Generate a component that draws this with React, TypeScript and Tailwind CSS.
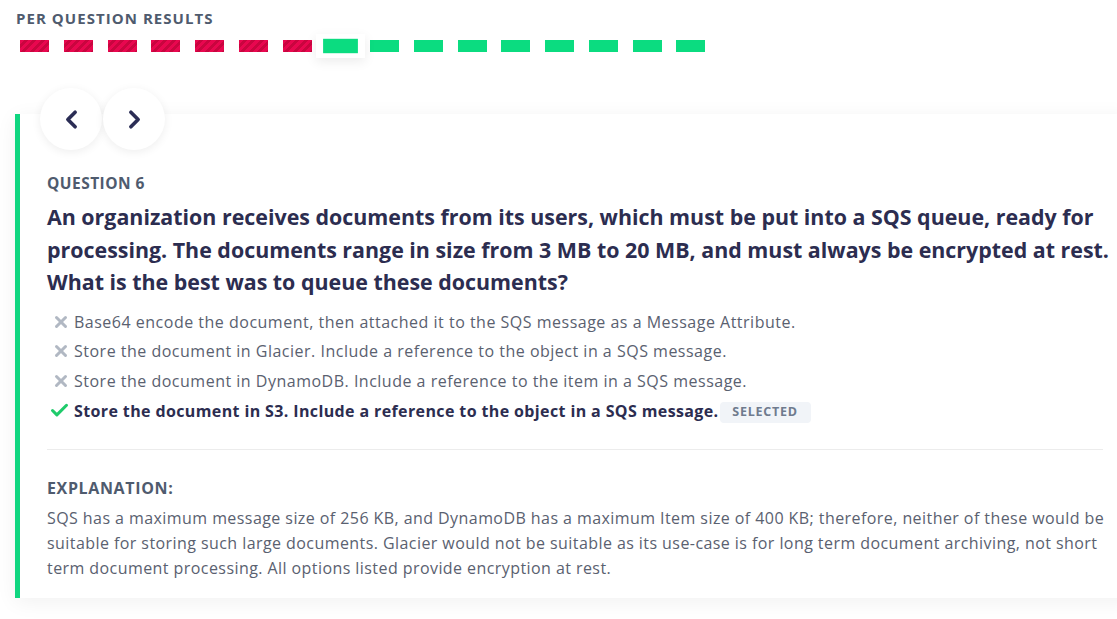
import { ChevronLeft, ChevronRight, X, Check } from "lucide-react";

const results = [
  false, false, false, false, false, false, false,
  true, true, true, true, true, true, true, true, true,
];

const current = 7;

const options = [
  { text: "Base64 encode the document, then attached it to the SQS message as a Message Attribute.", correct: false },
  { text: "Store the document in Glacier. Include a reference to the object in a SQS message.", correct: false },
  { text: "Store the document in DynamoDB. Include a reference to the item in a SQS message.", correct: false },
  { text: "Store the document in S3. Include a reference to the object in a SQS message.", correct: true, selected: true },
];

function ResultBar({ ok, active }: { ok: boolean; active: boolean }) {
  const bar = ok
    ? "bg-[#0bdc80]"
    : "bg-[repeating-linear-gradient(135deg,#e8074f_0px,#e8074f_3px,#c9053f_3px,#c9053f_6px)]";
  if (active) {
    return (
      <div className="relative w-[29px] h-[12px]">
        <div className="absolute -left-[6px] -top-[4px] w-[41px] h-[20px] scale-[1.2] bg-white shadow-[0_3px_10px_rgba(0,0,0,0.08)] flex items-center justify-center">
          <div className={`w-[29px] h-[12px] ${bar}`} />
        </div>
      </div>
    );
  }
  return <div className={`w-[29px] h-[12px] ${bar}`} />;
}

export default function App() {
  return (
    <div
      className="w-[1117px] h-[619px] overflow-hidden bg-white pt-2"
      style={{ fontFamily: '"Open Sans", "Noto Sans", sans-serif' }}
    >
      <h3 className="ml-4 text-[15px] leading-5 font-bold uppercase tracking-[0.07em] text-[#4f5b6e]">
        Per question results
      </h3>
      <div className="ml-5 mt-3 flex gap-[14.75px]">
        {results.map((ok, i) => (
          <ResultBar key={i} ok={ok} active={i === current} />
        ))}
      </div>

      <div className="relative ml-[15px] mt-[62px] w-[1120px] bg-white border-l-[5px] border-[#10d680] shadow-[0_4px_20px_rgba(0,0,0,0.06)] pl-[27px] pr-8 pt-[59px] pb-[17px]">
        <div className="absolute -top-[26px] left-[20px] flex gap-px">
          <button className="w-[62px] h-[62px] rounded-full bg-white shadow-[0_2px_10px_rgba(0,0,0,0.07)] flex items-center justify-center text-[#2b2d55]">
            <ChevronLeft size={29} strokeWidth={3} />
          </button>
          <button className="w-[62px] h-[62px] rounded-full bg-white shadow-[0_2px_10px_rgba(0,0,0,0.07)] flex items-center justify-center text-[#2b2d55]">
            <ChevronRight size={29} strokeWidth={3} />
          </button>
        </div>

        <div className="text-[15.5px] leading-5 font-bold uppercase tracking-[0.03em] text-[#4f5b6e]">
          Question 6
        </div>
        <p className="mt-2 whitespace-nowrap text-[21.4px] leading-[32.5px] font-bold text-[#2c2d50]">
          An organization receives documents from its users, which must be put into a SQS queue, ready for
          <br />
          processing. The documents range in size from 3 MB to 20 MB, and must always be encrypted at rest.
          <br />
          What is the best was to queue these documents?
        </p>

        <ul className="mt-[8.5px]">
          {options.map((o) => (
            <li key={o.text} className="flex items-center h-[29.67px] text-[16px] tracking-[0.5px] whitespace-nowrap">
              <span className="w-[27px] flex justify-center">
                {o.correct ? (
                  <Check size={21} strokeWidth={3.5} className="text-[#1fcb6b] -ml-[2px]" />
                ) : (
                  <X size={18} strokeWidth={4} className="text-[#b1b8c3]" />
                )}
              </span>
              <span className={o.correct ? "font-bold text-[#2c2d50] tracking-[0.38px]" : "text-[#5a6170]"}>{o.text}</span>
              {o.selected && (
                <span className="ml-px mt-1 w-[91px] h-[21px] rounded-sm bg-[#f1f4f8] text-[12.5px] font-bold tracking-[0.06em] text-[#6f7b8e] flex items-center justify-center">
                  SELECTED
                </span>
              )}
            </li>
          ))}
        </ul>

        <div className="mt-[23px] border-t border-[#ececec]" />

        <div className="mt-[28px] text-[16px] leading-5 font-bold uppercase tracking-[0.04em] text-[#4f5b6e]">
          Explanation:
        </div>
        <p className="mt-[8.5px] whitespace-nowrap text-[16px] tracking-[0.43px] leading-[25px] text-[#5a6170]">
          SQS has a maximum message size of 256 KB, and DynamoDB has a maximum Item size of 400 KB; therefore, neither of these would be
          <br />
          suitable for storing such large documents. Glacier would not be suitable as its use-case is for long term document archiving, not short
          <br />
          term document processing. All options listed provide encryption at rest.
        </p>
      </div>
    </div>
  );
}
